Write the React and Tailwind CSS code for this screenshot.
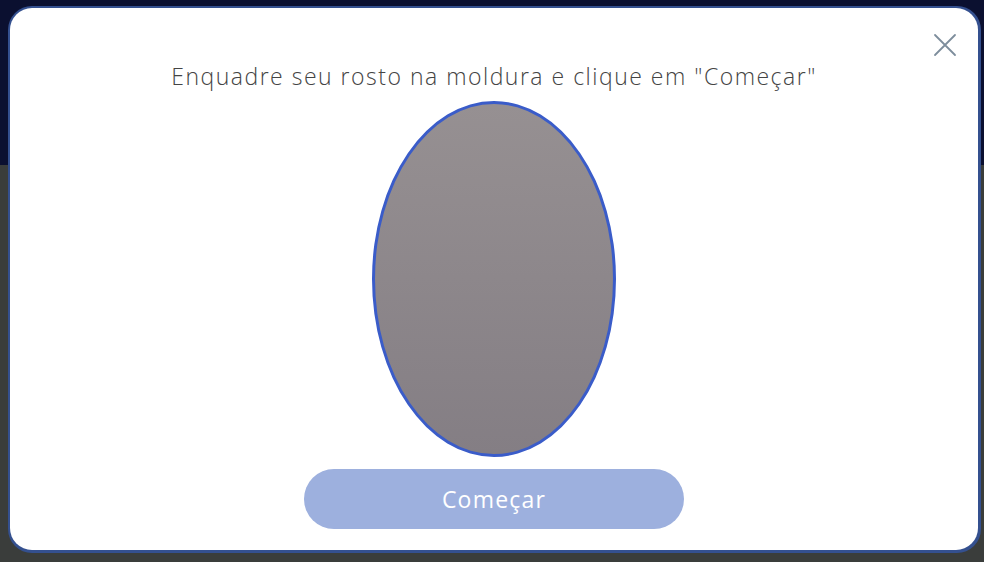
import React from "react";

export default function App() {
  return (
    <div className="relative w-[984px] h-[562px] overflow-hidden" style={{ fontFamily: "'Open Sans', Lato, sans-serif" }}>
      <div className="flex flex-col h-full">
        <div className="h-[165px] bg-[#0b1030]" />
        <div className="flex-1 bg-[#3a3d3b]" />
      </div>
      <div className="absolute left-[8px] top-[6px] w-[973px] h-[547px] rounded-[24px] bg-[#34508f]" />
      <div className="absolute left-[10px] top-[8px] w-[968px] h-[542px] rounded-[22px] bg-white flex flex-col items-center pt-[54px]">
        <button className="absolute right-[21px] top-[25px] w-[24px] h-[24px] text-[#7d8d9c]">
          <svg viewBox="0 0 24 24" width="24" height="24" fill="none" stroke="currentColor" strokeWidth="1.8" strokeLinecap="round">
            <path d="M2 2L22 22M22 2L2 22" />
          </svg>
        </button>
        <p className="text-[23px] leading-[29px] font-light text-[#444444] tracking-[1.5px]">
          Enquadre seu rosto na moldura e clique em "Começar"
        </p>
        <div className="mt-[10px] w-[244px] h-[356px] rounded-[50%] border-[3px] border-[#3a5cc9] bg-gradient-to-b from-[#969092] to-[#847e84]" />
        <button className="mt-[12px] w-[380px] h-[60px] rounded-full bg-[#9db0de] text-white text-[23px] tracking-[1.2px]">
          Começar
        </button>
      </div>
    </div>
  );
}
